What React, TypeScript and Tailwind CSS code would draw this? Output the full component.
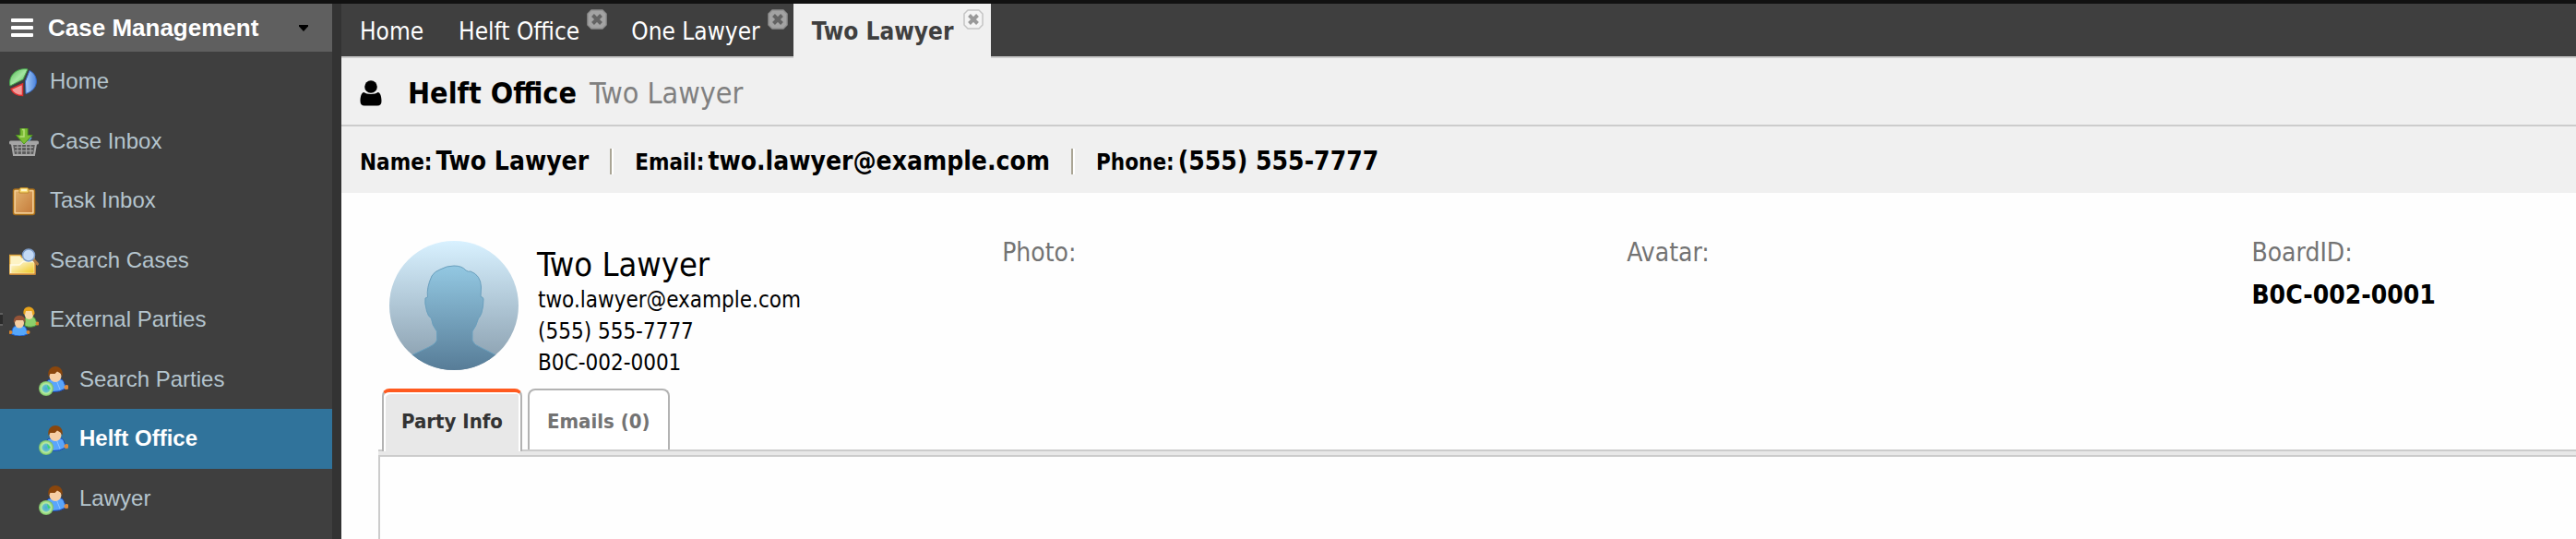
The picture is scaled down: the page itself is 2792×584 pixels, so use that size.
import type { ReactNode } from 'react';

interface IconProps {
  className?: string;
}

function PieIcon({ className }: IconProps) {
  return (
    <svg viewBox="0 0 32 32" className={className} aria-hidden="true">
      <defs>
        <linearGradient id="pie-green" x1="0" y1="0" x2="1" y2="1">
          <stop offset="0" stopColor="#4fb44f" />
          <stop offset="0.5" stopColor="#a5e6a2" />
          <stop offset="1" stopColor="#4fb44f" />
        </linearGradient>
        <linearGradient id="pie-blue" x1="0" y1="0" x2="1" y2="0">
          <stop offset="0" stopColor="#a9cdf7" />
          <stop offset="1" stopColor="#4a83de" />
        </linearGradient>
      </defs>
      <path d="M1 19C-1.500 8 8 -1 20 1L15 12Z" fill="url(#pie-green)" stroke="#46a84d" />
      <path d="M22 2.500C32 7 33 23 18 27.500L17.500 14Z" fill="url(#pie-blue)" stroke="#3468c4" />
      <path d="M2 22.500L14.500 17V29.500C8 29.500 4 27 2 22.500Z" fill="#f39a98" stroke="#dc3030" strokeWidth="1.500" />
    </svg>
  );
}

function BasketIcon({ className }: IconProps) {
  return (
    <svg viewBox="0 0 32 32" className={className} aria-hidden="true">
      <path d="M3 17H29L27 29H5Z" fill="#5c5c5c" stroke="#a9a9a9" strokeWidth="2" />
      <path d="M6 20.500H26M6 24.500H26M9 17V29M13.500 17V29M18.500 17V29M23 17V29" stroke="#a4a4a4" strokeWidth="1.200" />
      <rect x="0" y="13.500" width="32" height="4" rx="1.500" fill="#a5a5a5" />
      <path d="M12 0H20V7.500H25L16 17L7.500 7.500H12Z" fill="#7cbd35" stroke="#4f9a1d" />
      <path d="M14 1.500H16V9H11.500" stroke="#b5e07a" strokeWidth="1.500" fill="none" />
      <path d="M21 14L24 10" stroke="#5e9fd4" strokeWidth="1.500" />
    </svg>
  );
}

function ClipboardIcon({ className }: IconProps) {
  return (
    <svg viewBox="0 0 32 32" className={className} aria-hidden="true">
      <defs>
        <linearGradient id="clip-board" x1="0" y1="0" x2="1" y2="1">
          <stop offset="0" stopColor="#dfae6b" />
          <stop offset="1" stopColor="#c67d3c" />
        </linearGradient>
      </defs>
      <rect x="4.500" y="2" width="23" height="27.500" rx="2" fill="#f3cd92" stroke="#a86d17" strokeWidth="1.500" />
      <rect x="7" y="4.500" width="18" height="22.500" fill="url(#clip-board)" />
      <path d="M11 6V2.500Q11 0.500 13 0.500H19Q21 0.500 21 2.500V6Z" fill="#f6d873" stroke="#c08a2a" />
      <path d="M13 3H19" stroke="#fff6c8" strokeWidth="2" />
    </svg>
  );
}

function FolderSearchIcon({ className }: IconProps) {
  return (
    <svg viewBox="0 0 32 32" className={className} aria-hidden="true">
      <defs>
        <linearGradient id="folder-front" x1="0" y1="0" x2="1" y2="1">
          <stop offset="0" stopColor="#fffbe6" />
          <stop offset="0.450" stopColor="#f7e490" />
          <stop offset="1" stopColor="#efc619" />
        </linearGradient>
      </defs>
      <path d="M0.500 8.500H12L14 11H27V28.500H0.500Z" fill="#fdf3c4" stroke="#dfa53a" strokeWidth="1.500" />
      <path d="M1.500 19H11L15 15.500H27.500V28.500H1.500Z" fill="url(#folder-front)" stroke="#fffbe8" strokeWidth="1.500" />
      <path d="M0.500 29H28V16" fill="none" stroke="#d88b2a" strokeWidth="1.500" />
      <path d="M26 13L31.500 19" stroke="#ab7845" strokeWidth="3" />
      <circle cx="21" cy="8.500" r="6.500" fill="#c3daf6" stroke="#7d9cc8" strokeWidth="1.500" />
    </svg>
  );
}

function PeopleIcon({ className }: IconProps) {
  return (
    <svg viewBox="0 0 32 32" className={className} aria-hidden="true">
      <path d="M17 20L17 14Q17 11 21 11H25Q29 12 30 20Q24 24 17 21Z" fill="#8ccf6c" stroke="#4a9a3b" />
      <circle cx="30.500" cy="18.500" r="2" fill="#d9852e" />
      <ellipse cx="21.500" cy="8" rx="5" ry="6" fill="#f9d9a8" />
      <path d="M15.500 8C14 -2 28 -2 27.500 8L25.500 10L24.500 5H18L17 9Z" fill="#e8a31b" />
      <path d="M2.500 30Q3 21 8 21H14Q19 21 20 30Q11 34 2.500 30Z" fill="#55a7fb" stroke="#1e5fd0" />
      <circle cx="1.500" cy="28" r="2" fill="#d9852e" />
      <circle cx="20.500" cy="28" r="2" fill="#d9852e" />
      <ellipse cx="11" cy="18" rx="5" ry="5.500" fill="#f6cfa3" />
      <path d="M5 18C3 7 19 7 17.500 18L15.500 15H7.500Z" fill="#955337" />
    </svg>
  );
}

function PersonGlobeIcon({ className }: IconProps) {
  return (
    <svg viewBox="0 0 32 32" className={className} aria-hidden="true">
      <defs>
        <radialGradient id="globe">
          <stop offset="0" stopColor="#4aa9d8" />
          <stop offset="0.450" stopColor="#62bfc8" />
          <stop offset="0.650" stopColor="#b9eaa0" />
          <stop offset="0.850" stopColor="#93d67c" />
          <stop offset="1" stopColor="#74b763" />
        </radialGradient>
      </defs>
      <path d="M8 26L7.500 18Q9 14 14 13.500H23Q28 14 29 24Q23 28 15 27.500Z" fill="#5aa5fb" stroke="#1746b8" />
      <path d="M19 15L23 25" stroke="#8cc3ff" />
      <circle cx="30" cy="22.500" r="2.500" fill="#dd8a3e" />
      <ellipse cx="18" cy="10.500" rx="6.500" ry="6.500" fill="#f7cfa4" />
      <path d="M10.500 11C8 -3.500 28 -3.500 25.500 10.500L23.500 7.500L20 5.500L17.500 8H12.500Z" fill="#8a460c" />
      <circle cx="8" cy="24" r="8" fill="url(#globe)" />
      <path d="M9 20L13 24L10 25Z" fill="#39d375" />
    </svg>
  );
}

function UserIcon({ className }: IconProps) {
  return (
    <svg viewBox="0 0 24 28" className={className} aria-hidden="true">
      <circle cx="12" cy="7" r="6.800" />
      <path d="M4.500 13C7 15.500 17 15.500 19.500 13C22.500 13.500 23.500 18 23.500 22.500Q23.500 27.500 19 27.500H5Q0.500 27.500 0.500 22.500C0.500 18 1.500 13.500 4.500 13Z" />
    </svg>
  );
}

function AvatarImage({ className }: IconProps) {
  return (
    <svg viewBox="0 0 140 140" className={className} role="img" aria-label="Avatar">
      <defs>
        <linearGradient id="avatar-bg" x1="0" y1="0" x2="0" y2="1">
          <stop offset="0" stopColor="#d8f1ff" />
          <stop offset="1" stopColor="#869bab" />
        </linearGradient>
        <linearGradient id="avatar-body" x1="0" y1="0" x2="0" y2="1">
          <stop offset="0" stopColor="#93c8e2" />
          <stop offset="1" stopColor="#567b96" />
        </linearGradient>
        <clipPath id="avatar-clip">
          <circle cx="70" cy="70" r="70" />
        </clipPath>
      </defs>
      <g clipPath="url(#avatar-clip)">
        <rect width="140" height="140" fill="url(#avatar-bg)" />
        <path
          d="M46 38Q49 33 55 31Q62 27 70 27Q79 27 83 32Q86 34 88 33Q99 37 99.500 50L99 60.500Q102 61 102 63Q102 71 100 78Q98 83 96.500 84Q94 93 90 98V108Q92 113 98 115L116 124V142H24V124L43 115Q51 111 51.500 107V98Q46 91 45.500 84Q42 82 40.500 76Q38 67 39 62L41.500 61Q40 51 46 38Z"
          fill="url(#avatar-body)"
          stroke="#6a9fbd"
          strokeWidth="1"
        />
      </g>
    </svg>
  );
}

function CloseIcon({ active }: { active?: boolean }) {
  return (
    <svg viewBox="0 0 22 22" className="size-[22px]" aria-hidden="true">
      <path
        d="M5 1H17L21 5V17L17 21H5L1 17V5Z"
        fill={active ? '#f4f4f4' : '#a3a3a3'}
        stroke={active ? '#c4c4c4' : '#8f8f8f'}
        strokeWidth="1.500"
        strokeLinejoin="round"
      />
      <path d="M6.500 6.500L15.500 15.500M15.500 6.500L6.500 15.500" stroke={active ? '#999999' : '#636363'} strokeWidth="4" />
    </svg>
  );
}

interface MenuItem {
  label: string;
  icon: (props: IconProps) => ReactNode;
  nested?: boolean;
  active?: boolean;
  expandable?: boolean;
}

const menuItems: MenuItem[] = [
  { label: 'Home', icon: PieIcon },
  { label: 'Case Inbox', icon: BasketIcon },
  { label: 'Task Inbox', icon: ClipboardIcon },
  { label: 'Search Cases', icon: FolderSearchIcon },
  { label: 'External Parties', icon: PeopleIcon, expandable: true },
  { label: 'Search Parties', icon: PersonGlobeIcon, nested: true },
  { label: 'Helft Office', icon: PersonGlobeIcon, nested: true, active: true },
  { label: 'Lawyer', icon: PersonGlobeIcon, nested: true },
];

const openTabs = [
  { label: 'Helft Office', active: false },
  { label: 'One Lawyer', active: false },
  { label: 'Two Lawyer', active: true },
];

const summary = [
  { label: 'Name:', value: 'Two Lawyer' },
  { label: 'Email:', value: 'two.lawyer@example.com' },
  { label: 'Phone:', value: '(555) 555-7777' },
];

const fields = [
  { label: 'Photo:', value: '' },
  { label: 'Avatar:', value: '' },
  { label: 'BoardID:', value: 'B0C-002-0001' },
];

function Sidebar() {
  return (
    <aside className="w-[370px] shrink-0 border-r-[10px] border-[#333333] bg-[#3f3f3f] font-['Liberation_Sans',Arial,sans-serif]">
      <button className="flex h-[52px] w-full items-center bg-[#5f5f5f] pl-3 text-[26px] leading-[30px] font-bold text-white">
        <svg viewBox="0 0 24 20" className="h-5 w-6" fill="currentColor" aria-hidden="true">
          <rect width="24" height="4" rx="1" />
          <rect y="8" width="24" height="4" rx="1" />
          <rect y="16" width="24" height="4" rx="1" />
        </svg>
        <span className="ml-4">Case Management</span>
        <svg viewBox="0 0 10 7" className="mr-[26px] ml-auto h-[7px] w-[10px]" aria-hidden="true">
          <path d="M0 0H10V1.500L5 7L0 1.500Z" fill="#000000" />
        </svg>
      </button>
      <nav className="grid h-[516px] grid-rows-8">
        {menuItems.map(({ label, icon: Icon, nested, active, expandable }) => (
          <a
            key={label}
            href="#"
            className={`relative flex items-center gap-3 text-2xl ${nested ? 'pl-[42px]' : 'pl-[10px]'} ${
              active ? 'bg-[#30739b] font-bold text-white' : 'text-[#b5c5ce]'
            }`}
          >
            {/* edge of the collapse handle, mostly hidden off the left side */}
            {expandable && (
              <span className="absolute left-0 h-[14px] w-[3px] border-y-2 border-[#5f5f5f] bg-[#2b2b2b]" />
            )}
            <Icon className="mt-1 size-8" />
            {label}
          </a>
        ))}
      </nav>
    </aside>
  );
}

function TabBar() {
  return (
    <nav className="flex h-[59px] border-b-2 border-[#cccccc] bg-[#3f3f3f] text-[26px] leading-[32px] text-white">
      <a href="#" className="pt-[14px] pr-[18px] pl-5">
        Home
      </a>
      {openTabs.map((tab) => (
        <div
          key={tab.label}
          className={`flex h-[59px] items-start pl-5 ${
            tab.active ? 'gap-[10px] bg-[#f0f0f0] pr-2 font-bold text-[#3f3f3f]' : 'gap-2 pr-[6px]'
          }`}
        >
          <a href="#" className="pt-[14px]">
            {tab.label}
          </a>
          <button aria-label={`Close ${tab.label}`} className="mt-[6px]">
            <CloseIcon active={tab.active} />
          </button>
        </div>
      ))}
    </nav>
  );
}

export default function App() {
  return (
    <div className="flex min-h-screen border-t-4 border-[#111111] bg-[#fefefe] font-['DejaVu_Sans_Condensed','Noto_Sans',sans-serif] text-black">
      <Sidebar />
      <div className="flex min-w-0 flex-1 flex-col">
        <TabBar />
        <header className="bg-[#f0f0f0]">
          <div className="flex h-[74px] items-center border-b-2 border-[#cccccc] pt-[3px] pl-5 text-[32px] leading-[40px]">
            <UserIcon className="h-7 w-6" />
            <h1 className="ml-7 font-bold">Helft Office</h1>
            <span className="ml-[14px] text-[#808080]">Two Lawyer</span>
          </div>
          <dl className="flex h-[72px] items-center pt-[3px] pl-5 font-bold">
            {summary.map((item, index) => (
              <div key={item.label} className="flex items-center">
                {index > 0 && (
                  <span className="mx-[23px] h-7 w-1 border-r-2 border-l-2 border-r-white border-l-[#aaa595]" />
                )}
                <div className="flex items-baseline gap-1">
                  <dt className="text-2xl">{item.label}</dt>
                  <dd className="text-[28px] leading-[36px]">{item.value}</dd>
                </div>
              </div>
            ))}
          </dl>
        </header>

        <main className="flex flex-1 flex-col pt-[48px]">
          <section className="grid grid-cols-[2fr_2fr_2fr_1fr] pr-[13px] pl-[39px]">
            <div className="flex gap-5 pt-1 pl-[13px]">
              <AvatarImage className="size-[140px]" />
              <div className="pt-[5px] text-2xl leading-[34px]">
                <h2 className="text-[36px] leading-[42px]">Two Lawyer</h2>
                <p className="pl-px">two.lawyer@example.com</p>
                <p className="pl-px">(555) 555-7777</p>
                <p className="pl-px">B0C-002-0001</p>
              </div>
            </div>
            {fields.map((field) => (
              <dl key={field.label} className="text-[28px] leading-[34px]">
                <dt className="text-[#737373]">{field.label}</dt>
                <dd className="mt-3 font-bold">{field.value}</dd>
              </dl>
            ))}
          </section>

          <div role="tablist" className="z-10 mt-[11px] ml-[44px] flex gap-[6px] text-[22px] leading-[28px] font-bold">
            <button
              role="tab"
              aria-selected="true"
              className="-mb-[2px] h-[68px] rounded-t-lg border-x-2 border-t-4 border-x-[#b3b3b3] border-t-[#ff5a1f] bg-[#e8e8e8] px-[19px] text-[#333333] shadow-[inset_2px_2px_0_#ffffff,inset_-2px_0_0_#ffffff]"
            >
              Party Info
            </button>
            <button
              role="tab"
              aria-selected="false"
              className="h-[66px] rounded-t-lg border-2 border-b-0 border-[#b3b3b3] bg-white px-[19px] pt-[4px] text-[#737373]"
            >
              Emails (0)
            </button>
          </div>
          <div className="ml-[40px] flex flex-1 flex-col">
            <div className="h-[8px] border-y-2 border-[#cccccc] bg-[#e8e8e8]" />
            <div role="tabpanel" className="flex-1 border-l-2 border-[#cccccc]" />
          </div>
        </main>
      </div>
    </div>
  );
}
